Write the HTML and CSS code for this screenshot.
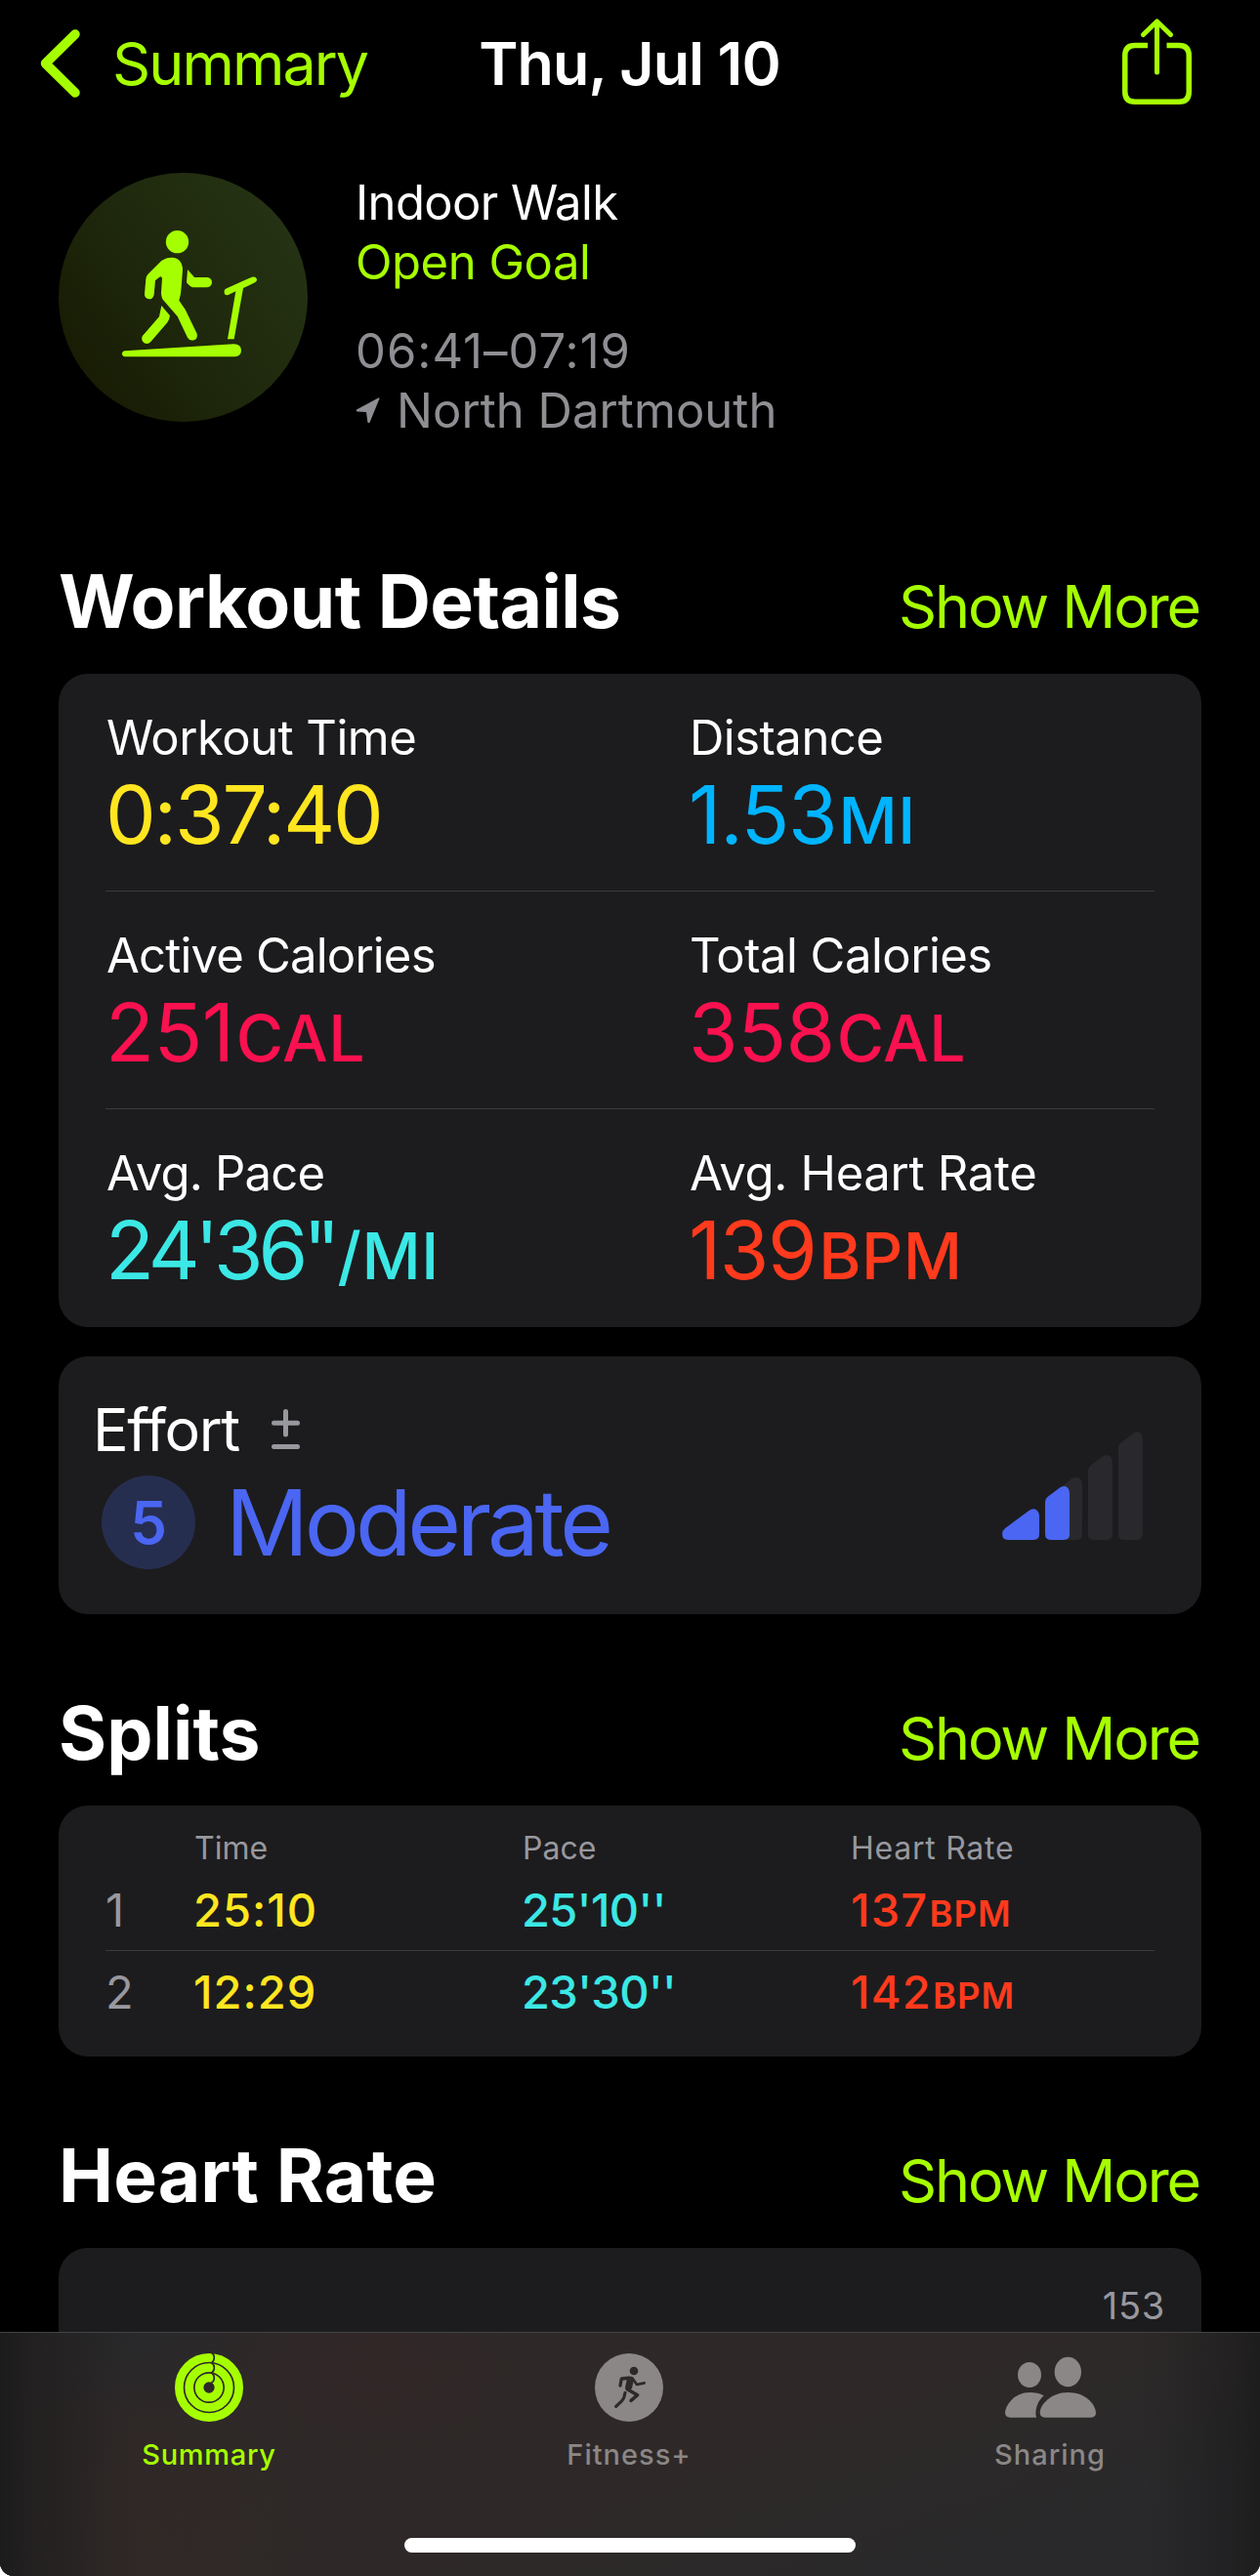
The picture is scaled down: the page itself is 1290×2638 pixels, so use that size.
FILE: index.html
```html
<!DOCTYPE html>
<html lang="en">
<head>
<meta charset="utf-8">
<title>Workout – Thu, Jul 10</title>
<link rel="stylesheet" href="styles.css">
</head>
<body>
<div class="app">
  <header class="nav">
    <a class="nav-back">
      <svg width="41" height="70" viewBox="0 0 41 70" fill="none" stroke="currentColor" stroke-width="9.500" stroke-linecap="round" stroke-linejoin="round"><path d="M36 5 5.500 35 36 65"/></svg>
      <span>Summary</span>
    </a>
    <h1 class="nav-title">Thu, Jul 10</h1>
    <svg class="nav-share" width="71" height="88" viewBox="0 0 71 88" fill="none" stroke="currentColor" stroke-width="5.500" stroke-linecap="round" stroke-linejoin="round">
      <path stroke-linecap="butt" d="M26 27.500H13Q2.750 27.500 2.750 38V75Q2.750 85.200 13 85.200H58Q68.250 85.200 68.250 75V38Q68.250 27.500 58 27.500H45.500"/>
      <path d="M35.500 4V55M21.500 16.500 35.500 3 49.500 16.500" stroke-width="5"/>
    </svg>
  </header>

  <main class="content">
    <section class="hero">
      <div class="hero-badge">
        <svg width="255" height="255" viewBox="60 50 765 765" fill="#a6ff00">
          <circle cx="424.500" cy="262" r="35"/>
          <path d="M376 320Q390 310 408 310Q440 312 441 348L437 400Q436 425 430 442L449 470L485 544Q488 560 476 564Q462 567 456 556L425 491L384 444Q375 434 375 418L378 374Q376 367 370 370L357 381L353 424Q350 438 338 438Q324 437 324 423L328 376Q329 367 336 360Z"/>
          <path d="M456 347 477 371H516Q531 373 531 387Q530 401 516 402H472Q464 401 453 387Z"/>
          <path d="M376 458 402 489Q400 503 394 510L343 569Q335 578 323 573Q312 565 317 552L369 492Z"/>
          <path d="M264 597 598 576Q621 577 621 596Q620 614 601 615H264Q255 614 255 606Q255 598 264 597Z"/>
          <path d="M569 411Q571 407 578 404L654 370Q664 367 669 376Q670 383 663 387L627 404L599 561H579L604 414L581 425Q571 428 569 420Z"/>
        </svg>
      </div>
      <div class="hero-text">
        <p class="hero-type">Indoor Walk</p>
        <p class="hero-goal">Open Goal</p>
        <p class="hero-time">06:41–07:19</p>
        <p class="hero-place">
          <svg width="25" height="27" viewBox="0 0 25 27" fill="currentColor"><path d="M24.500 1.200Q24.800 0 23.400 .6L1 12.400Q0 14 1.800 14.600L11 15 12.400 25.600Q13.200 27 14.600 25.600Z"/></svg>
          <span>North Dartmouth</span>
        </p>
      </div>
    </section>

    <div class="section-head"><h2 class="t-details">Workout Details</h2><a>Show More</a></div>
    <section class="card details">
      <div class="metric-row">
        <div class="metric yellow"><p class="label">Workout Time</p><p class="value v-time">0:37:40</p></div>
        <div class="metric blue"><p class="label">Distance</p><p class="value v-dist">1.53<span class="unit">MI</span></p></div>
      </div>
      <div class="metric-row">
        <div class="metric pink"><p class="label tight">Active Calories</p><p class="value">251<span class="unit">CAL</span></p></div>
        <div class="metric pink"><p class="label">Total Calories</p><p class="value">358<span class="unit">CAL</span></p></div>
      </div>
      <div class="metric-row">
        <div class="metric cyan"><p class="label tight">Avg. Pace</p><p class="value v-pace">24'36"<span class="unit">/MI</span></p></div>
        <div class="metric red"><p class="label loose">Avg. Heart Rate</p><p class="value v-heart">139<span class="unit">BPM</span></p></div>
      </div>
    </section>

    <section class="card effort">
      <div>
        <div class="effort-head">
          <span>Effort</span>
          <svg width="29" height="42" viewBox="0 0 29 42" fill="none" stroke="currentColor" stroke-width="5" stroke-linecap="round"><path d="M14.500 2.500V26M2.500 14.300H26.500M2.500 38.500H26.500"/></svg>
        </div>
        <div class="effort-level"><span class="effort-score">5</span><span class="effort-name">Moderate</span></div>
      </div>
      <svg width="144" height="111" viewBox="78 77.500 432 333.500">
        <g fill="#29292d">
          <path d="M210 330Q210 290 222 280L292 222Q306 215 317 223Q324 229 324 240V393Q324 411 306 411H228Q210 411 210 393Z"/>
          <path d="M342 200Q342 187 351 181L387 154Q400 145 411 154Q417 160 417 172V393Q417 411 399 411H360Q342 411 342 393Z"/>
          <path d="M435 130Q435 117 444 111L480 84Q493 73 504 83Q510 89 510 101V393Q510 411 492 411H453Q435 411 435 393Z"/>
        </g>
        <g fill="#4a66f2">
          <path d="M78 393Q78 382 87 375L160 321Q173 311 185 320Q192 326 192 337V393Q192 411 174 411H96Q78 411 78 393Z"/>
          <path d="M210 296Q210 284 219 277L254 251Q267 241 279 250Q285 256 285 268V393Q285 411 267 411H228Q210 411 210 393Z"/>
        </g>
      </svg>
    </section>

    <div class="section-head"><h2>Splits</h2><a>Show More</a></div>
    <section class="card splits">
      <div class="split-row split-head"><span></span><span>Time</span><span>Pace</span><span class="wide">Heart Rate</span></div>
      <div class="split-row"><span class="idx">1</span><span class="yellow-t">25:10</span><span class="cyan-t">25'10''</span><span class="red-t">137<small>BPM</small></span></div>
      <div class="split-row"><span class="idx">2</span><span class="yellow-t">12:29</span><span class="cyan-t">23'30''</span><span class="red-t">142<small>BPM</small></span></div>
    </section>

    <div class="section-head"><h2>Heart Rate</h2><a>Show More</a></div>
    <section class="card heart"><span>153</span></section>
  </main>

  <nav class="tabs">
    <div class="tab-list">
      <a class="tab active">
        <svg width="70" height="70" viewBox="147 60 210 210" fill="none">
          <g stroke="currentColor" stroke-width="26"><circle cx="252" cy="165" r="92"/><circle cx="252" cy="165" r="61"/><circle cx="252" cy="165" r="30"/></g>
          <path stroke="#2d2829" stroke-width="5" d="M259 57Q268 63 268 73Q268 83 260 89Q268 95 268 104Q268 114 260 120Q268 126 268 135Q268 146 259 151"/>
        </svg>
        <span>Summary</span>
      </a>
      <a class="tab">
        <svg width="70" height="70" viewBox="147 60 210 210" fill="none" stroke="#2d2928" stroke-linecap="round" stroke-linejoin="round">
          <circle cx="252" cy="165" r="105" fill="#8b8786" stroke="none"/>
          <circle cx="267" cy="114" r="13" fill="#2d2928" stroke="none"/>
          <path stroke-width="10" d="M252 136 229 138 225 159"/>
          <path stroke-width="8" d="M262 136 276 156 299 151"/>
          <path fill="#2d2928" stroke="none" d="M232 132Q252 129 260 131Q268 134 266 145L261 167 250 177Q240 174 240 166L245 142Z"/>
          <path stroke-width="10.500" d="M248 171 278 188 258 205"/>
          <path stroke-width="9.500" d="M240 181Q238 197 230 206L212 223"/>
        </svg>
        <span>Fitness+</span>
      </a>
      <a class="tab">
        <svg width="93" height="70" viewBox="144 60 279 210" fill="#8b8786">
          <ellipse cx="219" cy="126" rx="36" ry="39"/>
          <ellipse cx="337" cy="117" rx="41" ry="45.500"/>
          <path d="M263 190Q246 180 219 180Q184 181 163 204Q144 226 144 243Q145 257 160 257H240Q236 243 241 224Q247 205 263 190Z"/>
          <path d="M337 180C284 180 251 219 251 243Q252 257 267 257H408Q423 256 423 242C420 213 389 180 337 180Z"/>
        </svg>
        <span>Sharing</span>
      </a>
    </div>
    <div class="home-bar"></div>
  </nav>
</div>
</body>
</html>
```
FILE: styles.css
```css
* { box-sizing: border-box; margin: 0; padding: 0; }
html, body { background: #fff; }
body { width: 1290px; height: 2638px; overflow: hidden; font-family: Inter, "Liberation Sans", sans-serif; color: #fff; }
svg { display: block; flex: none; }
p, span, a, h1, h2 { white-space: nowrap; }

.app { display: flex; flex-direction: column; height: 2638px; background: #000; border-radius: 0 0 14px 14px; overflow: hidden; }

.nav { flex: none; height: 130px; padding: 0 70px 0 41px; display: grid; grid-template-columns: 1fr auto 1fr; align-items: center; color: #a6ff00; font-size: 61px; line-height: 74px; }
.nav-back { display: flex; align-items: center; gap: 33px; letter-spacing: -1.9px; }
.nav-title { font-size: 61px; font-weight: 600; color: #fff; letter-spacing: -.9px; margin-left: 28px; }
.nav-share { justify-self: end; margin-bottom: 4px; }

.content { flex: none; height: 2258px; padding: 0 60px; overflow: hidden; }

.hero { height: 364px; padding-top: 47px; display: flex; align-items: flex-start; gap: 49px; font-size: 49px; line-height: 61px; }
.hero-badge { width: 255px; height: 255px; border-radius: 50%; background: linear-gradient(55deg, #171b03 10%, #1f290d 50%, #263314 90%); }
.hero-type { letter-spacing: -.6px; }
.hero-goal { color: #a6ff00; letter-spacing: -.46px; }
.hero-time { margin-top: 30px; color: #8e8e93; letter-spacing: 1px; }
.hero-place { display: flex; align-items: center; gap: 17px; color: #8e8e93; letter-spacing: .05px; }

.section-head { height: 196px; padding: 77px 2px 0 0; display: flex; justify-content: space-between; align-items: baseline; line-height: 90px; }
.section-head h2 { font-size: 75px; font-weight: 700; letter-spacing: .1px; }
.section-head .t-details { letter-spacing: -.6px; }
.section-head a { font-size: 61px; letter-spacing: -2.1px; color: #a6ff00; }

.card { background: #1c1c1e; border-radius: 30px; }

.details { height: 669px; padding: 0 48px; }
.metric-row { height: 223px; padding-top: 37px; display: grid; grid-template-columns: 597px 1fr; border-bottom: 1px solid #3b3b3e; }
.metric-row:last-child { border-bottom: 0; }
.label { font-size: 49px; line-height: 58px; letter-spacing: -.5px; color: #fff; padding-left: 1px; }
.label.tight { letter-spacing: -.8px; }
.label.loose { letter-spacing: -.3px; }
.value { font-size: 82px; line-height: 100px; letter-spacing: -.5px; }
.unit { font-size: 66px; font-weight: 500; line-height: 1; letter-spacing: .4px; margin-left: 2px; }
.v-time { letter-spacing: -2.2px; }
.v-dist { letter-spacing: -1.2px; }
.v-pace { letter-spacing: -5.1px; }
.v-pace .unit { margin-left: 2px; letter-spacing: .6px; }
.v-heart { letter-spacing: -1.5px; }
.v-heart .unit { margin-left: 3px; }
.yellow { color: #ffe620; }
.blue { color: #00b4ff; }
.pink { color: #fa114f; }
.cyan { color: #3be8e5; }
.red { color: #ff3a1d; }

.effort { height: 264px; margin-top: 30px; padding: 0 60px 0 35px; display: flex; justify-content: space-between; align-items: center; }
.effort-head { display: flex; align-items: center; gap: 33px; font-size: 61px; line-height: 74px; letter-spacing: -1.4px; }
.effort-head svg { color: #98989f; }
.effort-level { display: flex; align-items: center; gap: 31px; margin: 10px 0 8px 9px; line-height: 96px; color: #4a66f2; }
.effort-score { width: 96px; height: 96px; border-radius: 50%; background: #262e50; text-align: center; font-size: 60px; font-weight: 600; }
.effort-name { font-size: 94px; letter-spacing: -4.2px; }

.splits { height: 257px; padding: 25px 48px 0; }
.split-row { height: 83px; display: grid; grid-template-columns: 90px 336px 337px 1fr; font-size: 47px; line-height: 84px; font-weight: 500; }
.split-row:last-child { border-top: 1px solid #3b3b3e; height: 85px; }
.split-head { height: 40px; font-size: 32px; line-height: 38px; font-weight: 400; color: #98989f; }
.split-head span { padding-left: 1px; }
.split-head .wide { letter-spacing: .74px; padding-left: 0; }
.idx { color: #98989f; font-weight: 400; }
.yellow-t { color: #ffe620; letter-spacing: 1px; }
.cyan-t { color: #3be8e5; letter-spacing: -.6px; }
.red-t { color: #ff3a1d; letter-spacing: 1.2px; }
.red-t small { font-size: 36.5px; font-weight: 600; line-height: 1; letter-spacing: 1px; margin-left: 1px; }

.heart { height: 300px; padding: 36px 37px 0; text-align: right; font-size: 38px; line-height: 46px; letter-spacing: .7px; color: #98989f; }

.tabs {
  flex: none; height: 250px; border-top: 1px solid #434345; padding-top: 21px;
  display: flex; flex-direction: column; align-items: center; justify-content: space-between;
  background:
    linear-gradient(90deg, #1c1b1c 0, rgba(28,27,28,.6) 35px, rgba(28,27,28,0) 140px, rgba(28,27,28,0) 1170px, rgba(28,27,28,.55) 1260px, #1e1d1e 1290px),
    radial-gradient(ellipse 160px 90px at 390px 40px, rgba(54,38,40,.6), rgba(54,38,40,0)),
    radial-gradient(ellipse 170px 160px at 150px 210px, rgba(50,41,38,.8), rgba(50,41,38,0)),
    radial-gradient(ellipse 160px 90px at 130px 0, rgba(40,41,43,.9), rgba(40,41,43,0)),
    linear-gradient(160deg, #2e2828 0, #2e2928 55%, #29292b 85%);
}
.tab-list { width: 100%; display: grid; grid-template-columns: 428px 432px 430px; }
.tab { display: flex; flex-direction: column; align-items: center; gap: 16px; font-size: 29px; line-height: 35px; font-weight: 500; letter-spacing: 1px; color: #8b8786; }
.tab.active { color: #a6ff00; letter-spacing: .7px; }
.home-bar { width: 462px; height: 15px; border-radius: 8px; background: #fff; margin-bottom: 24px; }
```
